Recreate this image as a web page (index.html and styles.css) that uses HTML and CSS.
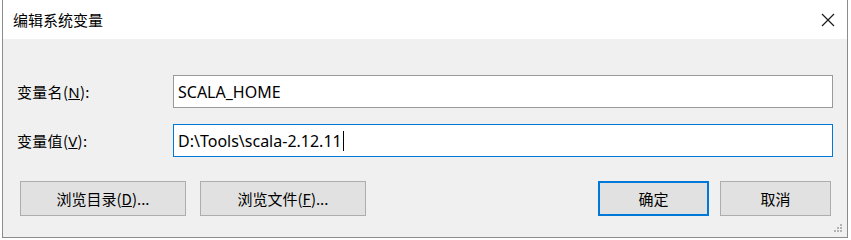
FILE: index.html
```html
<!DOCTYPE html>
<html lang="zh-CN">
<head>
    <meta charset="UTF-8">
    <meta name="viewport" content="width=device-width, initial-scale=1.0">
    <title>编辑系统变量</title>
    <link rel="stylesheet" href="styles.css">
</head>
<body>
    <div class="dialog">
        <div class="titlebar">
            <span class="title">编辑系统变量</span>
            <span class="close">
                <svg width="14" height="14" viewBox="0 0 14 14">
                    <path d="M1 1 L13 13 M13 1 L1 13" stroke="#1a1a1a" stroke-width="1.2" fill="none"/>
                </svg>
            </span>
        </div>

        <div class="content">
            <div class="form">
                <label class="label">变量名(<u>N</u>):</label>
                <div class="field">SCALA_HOME</div>

                <label class="label">变量值(<u>V</u>):</label>
                <div class="field focused">D:\Tools\scala-2.12.11<span class="caret"></span></div>
            </div>

            <div class="actions">
                <div class="group">
                    <div class="btn wide">浏览目录(<u>D</u>)...</div>
                    <div class="btn wide">浏览文件(<u>F</u>)...</div>
                </div>
                <div class="group small-gap">
                    <div class="btn default">确定</div>
                    <div class="btn">取消</div>
                </div>
            </div>
        </div>

        <!-- resize grip -->
        <svg class="grip" width="12" height="12" viewBox="0 0 12 12">
            <rect x="9" y="1" width="2" height="2" fill="#b4b4b4"/>
            <rect x="6" y="4" width="2" height="2" fill="#b4b4b4"/>
            <rect x="9" y="4" width="2" height="2" fill="#b4b4b4"/>
            <rect x="3" y="7" width="2" height="2" fill="#b4b4b4"/>
            <rect x="6" y="7" width="2" height="2" fill="#b4b4b4"/>
            <rect x="9" y="7" width="2" height="2" fill="#b4b4b4"/>
        </svg>
    </div>
</body>
</html>
```

FILE: styles.css
```css
body {
  margin: 0;
  padding: 0;
  background-color: #ffffff;
  font-family: "Noto Sans", "Noto Sans CJK SC", sans-serif;
  font-size: 15px;
  color: #000;
}

.dialog {
  position: relative;
  margin-left: 2px;
  width: 844px;
  height: 237px;
  background-color: #f0f0f0;
  border: 1px solid #8c8c8c;
  border-top: none;
}

.titlebar {
  height: 39px;
  background-color: #ffffff;
  display: flex;
  align-items: center;
  justify-content: space-between;
  padding-left: 10px;
  padding-right: 12px;
}
.title {
  font-family: "Noto Sans CJK SC", sans-serif;
  font-size: 15px;
  color: #000;
}
.close {
  display: flex;
  align-items: center;
}

.content {
  padding: 36px 14px 0 14px;
}

.form {
  display: grid;
  grid-template-columns: 156px 1fr;
  row-gap: 16px;
  align-items: center;
}
.label {
  font-family: "Noto Sans CJK SC", sans-serif;
  font-size: 15px;
  letter-spacing: 0.3px;
}
.label u {
  font-family: "Noto Sans", sans-serif;
}

.field {
  height: 33px;
  box-sizing: border-box;
  background: #fff;
  border: 1px solid #9a9a9a;
  padding-left: 4px;
  display: flex;
  align-items: center;
  font-size: 16px;
}
.field.focused {
  border-color: #0078d7;
}
.caret {
  display: inline-block;
  width: 1px;
  height: 20px;
  background: #000;
  margin-left: 1px;
}

.actions {
  display: flex;
  justify-content: space-between;
  margin-top: 24px;
  padding-left: 3px;
  padding-right: 2px;
}
.group {
  display: flex;
  gap: 14px;
}
.group.small-gap {
  gap: 11px;
}

.btn {
  width: 111px;
  height: 35px;
  box-sizing: border-box;
  background-color: #e1e1e1;
  border: 1px solid #adadad;
  display: flex;
  align-items: center;
  justify-content: center;
  font-family: "Noto Sans CJK SC", sans-serif;
  font-size: 15px;
}
.btn.wide {
  width: 166px;
}
.btn.default {
  border: 2px solid #0078d7;
}

.grip {
  position: absolute;
  right: 4px;
  bottom: 2px;
}
```
